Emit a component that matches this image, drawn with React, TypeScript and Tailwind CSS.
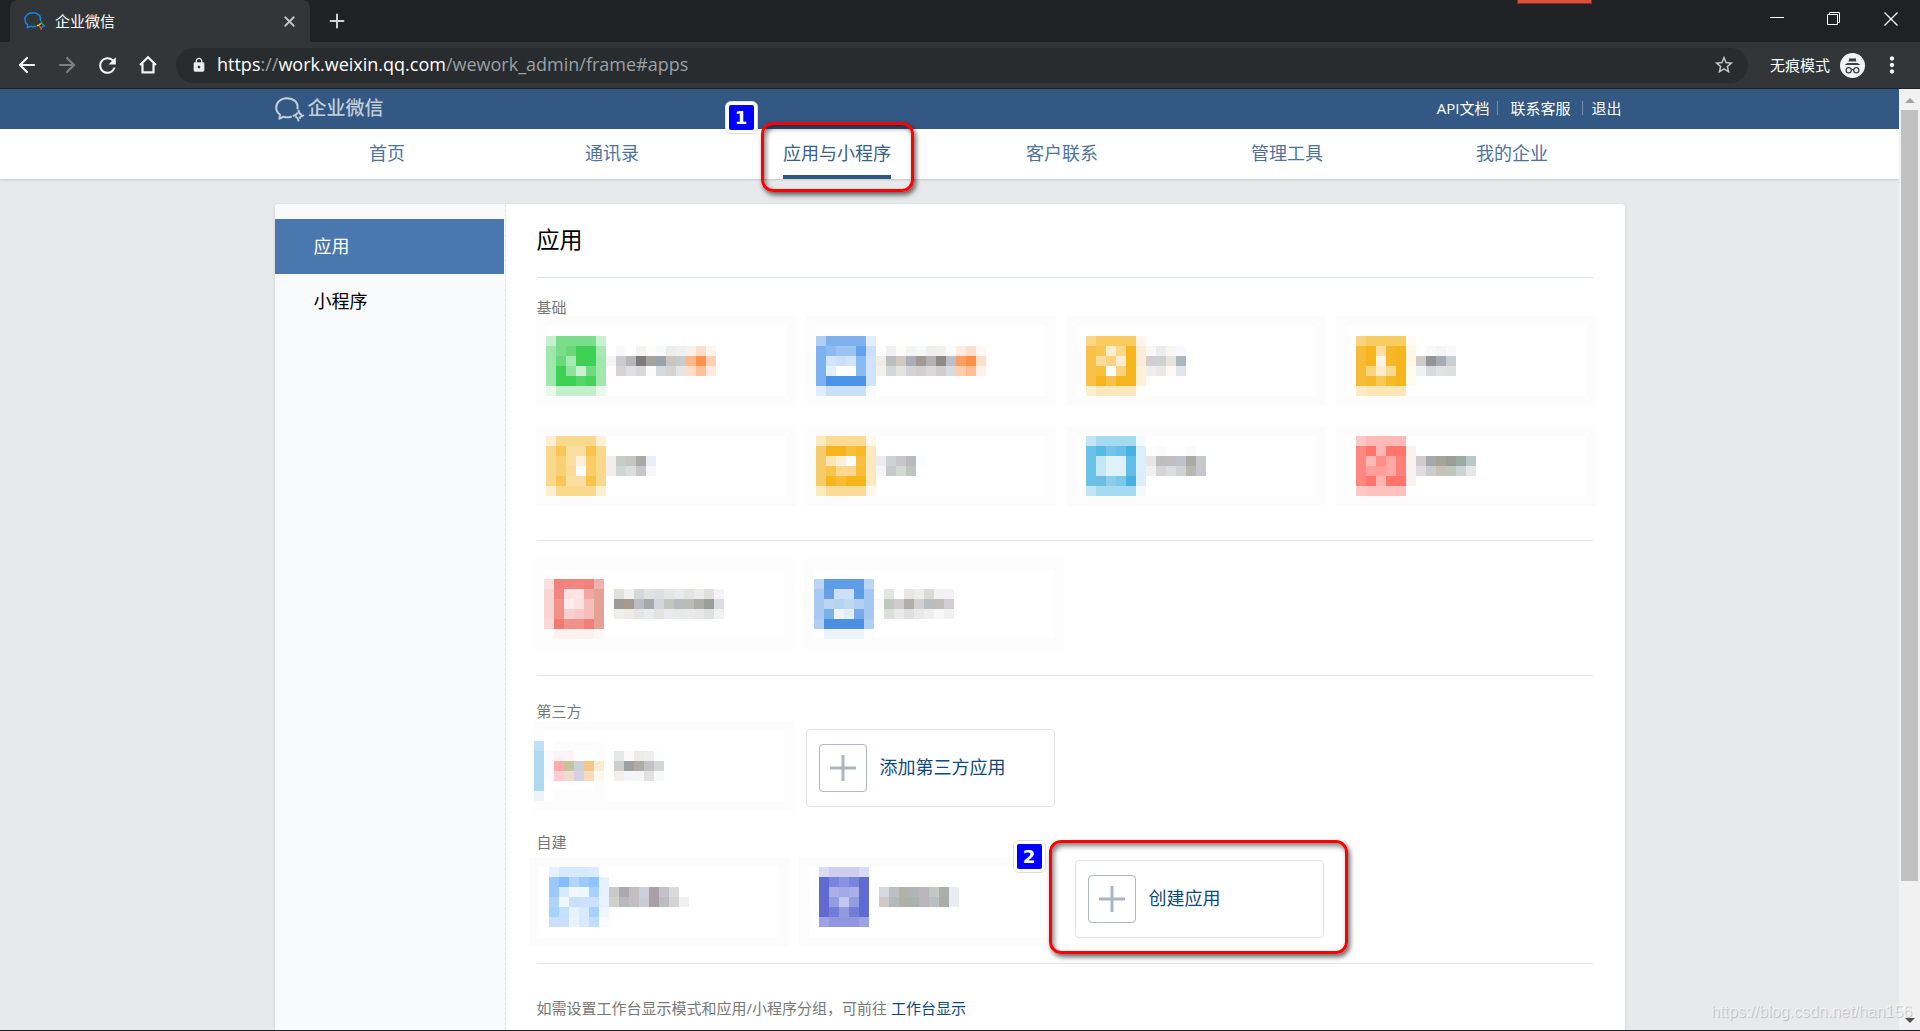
import React from "react";
import {ArrowLeft, ArrowRight, Plus, X} from "lucide-react";
import {MdLock, MdMoreVert, MdRefresh, MdStarBorder} from "react-icons/md";

interface MosaicData {
    frame: [number, number, number, number];
    at: [number, number];
    rows: string[];
}

const CELL = 10;

// every row is a list of 10px cells, "." leaves the cell empty
const basicApps: MosaicData[] = [
    {
        frame: [-1, -6, 260, 90],
        at: [9, 14],
        rows: [
            "c5f0ce 7add8b 7add8b 7add8b 7add8b c8f1d0",
            "9fe8ad 7add8b 69d97c 3dd052 3dd052 a6e9b2 . f9f9f9 . f3f3f3 fdfcfb f8fafc ededeb eff0f2 fff0e8 ffdfcb fff5f0",
            "9fe8ad 69d97c a5eab1 3dd052 3dd052 a0e8ad f5f4f4 cccbcf b8b7b7 7e7b7c a3a39c 9ba3ab c9c5c0 c7cbc9 ffb688 ff934c ffd0b3",
            "9fe8ad 3dd052 8fe29c c8f1d0 6fdb80 a0e8ad fefdfd d5d3d4 dfe0e6 d9d8d9 fcfbfb d5d8dd d4d5d3 e3e4e3 ffddc9 ffbf98 ffeadf",
            "9fe8ad 3dd052 3dd052 53d668 47d35c a0e8ad",
            "e9f9ec c5f0ce c5f0ce c5f0ce c5f0ce e9f9ec",
        ],
    },
    {
        frame: [0, -6, 250, 90],
        at: [10, 14],
        rows: [
            "b1cff5 80b1ed 80b1ed 80b1ed 80b1ed e4eefb",
            "7db0ee 8dbaf0 9bc4f3 9bc4f3 64a3eb cbdff6 . f1f1f1 fdfcf8 f3f4f6 f7f9f9 efeff0 f1f1ef fafbfd ffebe0 ffdfcc fff8f5",
            "7db0ee d2e4f9 cbdff7 d2e4f9 89baf0 d0e3f9 f0ede6 babfbd d1c9be a9afba a29a90 b3b1b4 8b8c88 bdbfc8 fb9f63 fd8f48 ffdfcc",
            "7db0ee e6f0fc fff fff 89baf0 d0e3f9 f4f1eb d2d7d7 e5e3df d3d4d8 d4cfcd dad8da cecfcd d9dadf ffceb0 ffbd94 fff1ea",
            "7db0ee 4a94e8 4a94e8 4a94e8 4a94e8 d0e3f9",
            "e1edfc c9def7 c9def7 c9def7 c9def7 f7fafe",
        ],
    },
    {
        frame: [-9, -6, 260, 90],
        at: [11, 14],
        rows: [
            "fbd68a f9cb60 f9cb60 f9cb60 f9cb60 fff5ea",
            "f7c14a f9c655 fdedd0 fad88c f6b51d fdecd5 f8f8f8 ececec f9f7f6 f9faff",
            "f7c14a fbdd9c fad481 fdedd0 f6b51d fdecd5 d3ccd2 cfd0d2 e8e3dc adb5bf",
            "f7c14a f9c03a fff f9d27c f6b51d fdf1dc eeeeef e9e9ea fdf8f3 e1e4ec",
            "f7c14a f6b51d f9c24a f6b51d f6b51d fdf1dc",
            "fdefd0 fde8bc fde8bc fde8bc fde8bc fffdfa",
        ],
    },
    {
        frame: [-8, -6, 260, 90],
        at: [12, 14],
        rows: [
            "f9d37d f9cc62 f9cc62 f9cc62 f9cc62 fffbf4",
            "f7bc35 f6b51d fbdfa4 f6b829 f6b51d fef6e6 . f9f9f9 f5f5f7 fafafa",
            "f7bc35 f6b51d fff4e2 f6b829 f6b51d fff6e5 cfcac8 929497 a6abb5 cbced0",
            "f7bc35 f9d47e fdecca fad990 f6b51d fffbf0 f1f1f2 d7d9dd e1e2e3 dfdfde",
            "f7bc35 f7b92c f9c753 f7b92c f6b51d fffbf0",
            "fcebc7 fbe6b6 fbe6b6 fbe6b6 fbe6b6 fffefc",
        ],
    },
    {
        frame: [-1, -1, 260, 80],
        at: [9, 9],
        rows: [
            "fdefd2 fad98c fad98c fad98c fad98c fdefd4",
            "fad98c f9c655 fbdfa0 fbdfa0 f9c349 fad98c",
            "fad98c f9d174 fbdf9f fdf0da f9cd66 fad98c f1eeeb c4cbc9 c4c6c0 aaa9a5 e9edf7",
            "fad98c f9d174 fbdc97 fff f9cd66 fad98c f1eeeb d1d7d7 d9dfdb c7c5c7 f7f8fb",
            "fad98c f9c655 fbdfa0 fbdfa0 f9c349 fad98c",
            "fdefd2 fad98c fad98c fad98c fad98c fdefd4",
        ],
    },
    {
        frame: [0, -1, 250, 80],
        at: [10, 9],
        rows: [
            "fceabf fbdb92 fbdb92 fbdb92 fbdb92 fff7e8",
            "f6cc6a f6b51d f6b51d f8bf3c f8b829 fce9bf",
            "f6cc6a fbe5b4 fdf0d5 fff f7bf40 fce9bf eeecee cdd2d3 c7c7c9 bababa fafcfe",
            "f6cc6a f7c44e fad98f fad98f f7bd38 fce9bf f5f5f5 c6cacd d5d7d2 bec5c3",
            "f6cc6a f6b51d f8bc35 f6b51d f6b51d fce9bf",
            "fceabf fbdb95 fbdb95 fbdb95 fbdb95 fff7e8",
        ],
    },
    {
        frame: [-9, -1, 260, 80],
        at: [11, 9],
        rows: [
            "c1e5f5 a6daf0 a6daf0 a6daf0 a6daf0 f4fbfe",
            "6bc2e8 58b9e5 73c4e8 68c0e7 47b2e1 dbeff9 . fbfbfb . . fbfbfb",
            "6bc2e8 c4e7f6 dff2fa dff2fa 63bee7 dbeff9 e8e6e5 bdbebe c2bdbf bfc2cc aaaaa7 c6c9c8",
            "6bc2e8 c4e7f6 dff2fa dff2fa 63bee7 dbeff9 f1f1f2 d5d5d5 dcdce2 d0d2d6 b8b8b0 c7c6d0",
            "6bc2e8 68bee3 8acdec 7dc8ea 47b2e1 dbeff9",
            "c1e5f5 a6daf0 a6daf0 a6daf0 a6daf0 f4fbfe",
        ],
    },
    {
        frame: [-8, -1, 260, 80],
        at: [12, 9],
        rows: [
            "ffc8c7 ffbab7 ffbab7 ffbab7 ffbab7 fffdfd",
            "ff8781 ff746c ffb5b1 ff756d ff746c fbf1ef",
            "ff8781 ffb9b5 ff8e88 ffa8a4 ff8078 fbf1ef d1cbce a5a9ad a6a499 9b9e98 9baaa3 b9c8c8",
            "ff8781 ffa19b ff9d98 ffaaa6 ff8078 fbf1ef e0dce1 c9cdd0 c7c1ba c1c6c0 cbd4d2 e6e7e9",
            "ff8781 ff756e ffb5b1 ff756d ff746c fbf1ef",
            "ffc8c7 ffc1be ffc1be ffc1be ffc1be fffdfd",
        ],
    },
];

const groupApps: MosaicData[] = [
    {
        frame: [-3, -5, 260, 90],
        at: [7, 15],
        rows: [
            "fde0de f0817b f2857f f2857f f0817b f0b1ac",
            "fbd3d0 f2857f fde2e1 fee5e4 f4a7a2 e6a196 . dfe1db f0f0f0 d7d8db e2e2e2 dfdfe0 e6e6e6 e8e9eb e3e4e2 ebebea dfdfdd f3f3f7",
            "fbd3d0 f2908a fdecec fde1e0 f7bdba e6a196 fdfcfa 9b9b98 a59990 bbbdc3 a8a8aa d4d5de c2c6be bbb9c0 bcbbb4 abadaa 9b9f9a dcdce2",
            "fbd3d0 f2908a fad0ce f9c9c8 f7bdba e6a196 . efefed f0eae6 e5e5e6 e9ebef e4e3e1 eaebee e7eae8 e9ebeb e7e7e8 dfe1df f0f0f5",
            "fbd8d6 f07a71 f2908a f2908a f08079 e6a196",
            ". fcf1ef fcf1ef fcf1ef fcf1ef fef8f9",
        ],
    },
    {
        frame: [-2, -5, 260, 90],
        at: [8, 15],
        rows: [
            "bcd5f4 5f9de5 5f9de5 5f9de5 5f9de5 bcd5f4",
            "a8caf0 689fe5 cde0f7 cde0f7 5e9be5 a6c8f0 . e4e4e2 fbfdfe e6e6e4 ededeb dadad7 f1f3f2 f3f1f5",
            "a8caf0 bdd5f3 b7d3f2 bfd8f4 b3cff1 a6c8f0 f9faf8 bfc8bf cfcccf b0aea8 d1d1d4 b7bec2 c0bdb8 d1cdd5",
            "a8caf0 7bafe8 eef4fc e2edfa 74a9ea a6c8f0 fcfcf9 dedfdc e8e9e9 dfe0dd e9e9ea f0efed f8f8f9 f1f1f2",
            "b0cff3 4a90e2 4a90e2 4a90e2 4a90e2 b0cff3",
            ". edf4fc edf4fc edf4fc edf4fc fbfdff",
        ],
    },
];

const thirdPartyApp: MosaicData = {
    frame: [-3, -8, 260, 90],
    at: [-3, 12],
    rows: [
        "bfe0f4 . fcfcfc fcfcfc fcfcfc fcfcfc fcfcfc",
        "b0d8f0 fcfcfc fff3f3 fff4f4 . . fcfcfc . e6e7e8 fafaf9 ebebec eeeeed fdfdfd",
        "b0d8f0 fcfcfc ffabae c6c49e cbd1d4 f6c68b fcebd3 . cececd 9fa0a2 b0aba6 c0c2c8 d4d5d7",
        "b0d8f0 fcfcfc ffcdcf efdbd2 d6d0e6 f8dbbb fdf8f0 . f1f0ef f3f5f9 f4f6f5 e3e1e0 f7f8fa",
        "b0d8f0 . . . . . fcfcfc",
        "ecf4fb . fcfcfc fcfcfc fcfcfc fcfcfc fcfcfc",
    ],
};

const ownApps: MosaicData[] = [
    {
        frame: [-8, -3, 260, 90],
        at: [12, 7],
        rows: [
            "e7f0ff d5e8fe d7e9fc d7e9fc dbebfc fdfeff",
            "9cc9fc 84bcff b1d5fd 9bcafb 8dc3ff e7f1ff",
            "9cc9fc d7e8ff f3f8ff eef6ff a5d1ff e7f1ff c9c9c8 aaa9b0 c3bdbe cacfda aaa0a6 c2c3ca dadada",
            "b0d3fa eef6ff c8dffd cbe1ff cbe1ff e7f1ff d1d1cc bab8be c3bec4 cacdd7 aaa0a6 bcbdc4 d4d4d5 f0f0f1",
            "a5d1ff c3dfff e3f2ff d7ebfc a5d1ff f0f7ff",
            "c8e0fd c8e0fd e9f3fe d7e9fa c0defc f7fbff",
        ],
    },
    {
        frame: [-7, -3, 260, 90],
        at: [13, 7],
        rows: [
            "d9daf5 cccdef cccdef cccdef d9daf5",
            "606bd2 7a84dc 8991e0 7a84dc 606bd2",
            "606bd2 aab0e7 a3a9e7 aab0e7 606bd2 . d6d7df bdbfc1 b0b2aa b0b6b6 bab6bb c2c9c5 abaea9 ebecf3",
            "606bd2 949ce2 c3c6f0 949ce2 606bd2 . d0c9c8 b1babf afb1a7 aab2ad bab5bb babfc2 abaca5 ebecf3",
            "606bd2 737dda 949ae2 737dda 606bd2",
            "9da2e4 9096e0 9096e0 9096e0 9da2e4",
        ],
    },
];

const navItems = ["首页", "通讯录", "应用与小程序", "客户联系", "管理工具", "我的企业"];

const Mosaic: React.FC<{ data: MosaicData }> = ({data}) => {
    const [fx, fy, fw, fh] = data.frame;
    const [x0, y0] = data.at;
    return (
        <svg className="block h-[78px] w-full overflow-visible" shapeRendering="crispEdges" aria-hidden="true">
            <rect x={fx + 5} y={fy + 5} width={fw - 10} height={fh - 10} fill="none" stroke="#fcfcfc" strokeWidth="10"/>
            {data.rows.map((row, r) =>
                row.split(" ").map((color, c) =>
                    color === "." ? null : (
                        <rect
                            key={`${r}-${c}`}
                            x={x0 + c * CELL}
                            y={y0 + r * CELL}
                            width={CELL}
                            height={CELL}
                            fill={`#${color}`}
                        />
                    )
                )
            )}
        </svg>
    );
};

const AddCard: React.FC<{ label: string }> = ({label}) => (
    <button className="flex h-[78px] w-full items-center gap-[13px] rounded border border-[#e4e6e9] bg-white pl-3 text-lg text-[#0d4a7f]">
        <span className="flex size-12 items-center justify-center rounded border border-[#acb8c6]">
            <svg width="26" height="26" viewBox="0 0 26 26" stroke="#acb6c2" strokeWidth="3" aria-hidden="true">
                <path d="M13 0v26M0 13h26"/>
            </svg>
        </span>
        <span className="pb-0.5">{label}</span>
    </button>
);

const StepBadge: React.FC<{ step: number, className: string }> = ({step, className}) => (
    <span
        className={`absolute z-10 flex size-[33px] items-center justify-center rounded-md border border-[#dedede] bg-white p-[3px] ${className}`}>
        <span
            className="flex size-full items-center justify-center rounded-xs bg-[#0000ff] font-['DejaVu_Sans'] text-lg leading-none font-bold text-white">
            {step}
        </span>
    </span>
);

const Outline: React.FC<{ className: string }> = ({className}) => (
    <span
        className={`pointer-events-none absolute rounded-xl border-3 border-[#ff0000] shadow-[2px_3px_5px_rgba(0,0,0,0.6),inset_2px_3px_5px_rgba(0,0,0,0.5)] ${className}`}/>
);

const WeworkLogo: React.FC<{ className: string, colors: string[] }> = ({className, colors}) => (
    <svg className={className} viewBox="0 0 30 25" fill="none" strokeWidth="2" strokeLinecap="round" strokeLinejoin="round"
         aria-hidden="true">
        <path d="M22.500 11.500C23.500 5.500 18.500 1.200 12 1.200C5.700 1.200 1.200 5.300 1.200 10.500C1.200 13.600 2.700 16 5 17.800L4.400 21.800L8.500 19.700C11 20.500 13.500 20.400 16 19.700"
              stroke={colors[0]}/>
        <path d="M23.500 13.800Q24 16.500 26 17.500" stroke={colors[1]}/>
        <path d="M28.300 18.600Q25.600 19 24.700 21" stroke={colors[0]}/>
        <path d="M23.500 23.600Q23 20.800 21 19.900" stroke={colors[2]}/>
        <path d="M18.500 18.700Q21.300 18.300 22.300 16.300" stroke={colors[3]}/>
    </svg>
);

const BrowserBar: React.FC = () => (
    <header className="shrink-0 border-b border-[#202124] bg-[#323639] font-['Open_Sans','Noto_Sans_CJK_SC',sans-serif]">
        <div className="relative flex h-[42px] items-stretch bg-[#202124] pl-[10px]">
            <div className="flex w-[300px] items-center rounded-t-lg bg-[#323639] pr-3 pl-[14px] text-white">
                <WeworkLogo className="mr-[9px] h-5 w-[22px]" colors={["#1485ee", "#1fae3a", "#f5571d", "#f9bc10"]}/>
                <span className="flex-1 text-[15px]">企业微信</span>
                <button aria-label="关闭标签页" className="text-[#c4c7ca]"><X size={17} strokeWidth={2.500}/></button>
            </div>
            <button aria-label="新标签页" className="ml-4 text-[#d0d2d4]"><Plus size={22} strokeWidth={2.200}/></button>
            <div className="absolute top-0 right-[328px] h-1 w-[75px] border border-t-0 border-[#8f2a20] bg-[#d9503f]"/>
            <div className="ml-auto flex items-start gap-[43px] pt-3 pr-[22px] text-white">
                <button aria-label="最小化">
                    <svg width="14" height="14" stroke="currentColor"><path d="M0 5.500h14"/></svg>
                </button>
                <button aria-label="还原">
                    <svg width="14" height="14" fill="none" stroke="currentColor">
                        <path d="M.5 2.500h10v10H.5zM2.500 2.500v-2h10v10h-2"/>
                    </svg>
                </button>
                <button aria-label="关闭">
                    <svg width="14" height="14" stroke="currentColor" strokeWidth="1.300"><path d="M.5.5l13 13M13.500.5l-13 13"/></svg>
                </button>
            </div>
        </div>
        <div className="flex h-[46px] items-center pl-[15px] text-[#f1f3f4]">
            <button aria-label="后退" className="mr-4"><ArrowLeft size={24} strokeWidth={2.200}/></button>
            <button aria-label="前进" className="mr-4 text-[#7d8083]"><ArrowRight size={24} strokeWidth={2.200}/></button>
            <button aria-label="重新加载" className="mr-4"><MdRefresh size={25}/></button>
            <button aria-label="主页" className="mr-4">
                <svg width="24" height="24" viewBox="0 0 24 24" fill="none" stroke="currentColor" strokeWidth="2.200">
                    <path d="M4 12L12 4.300L20 12M6.500 10.500V19.400H17.500V10.500"/>
                </svg>
            </button>
            <div className="flex h-[35px] flex-1 items-center rounded-full bg-[#282c2f] pr-[13px] pl-[15px]">
                <MdLock size={16} className="mr-[10px] text-[#e8eaed]"/>
                <span className="flex-1 pb-0.5 text-lg text-[#9aa0a6]">
                    <span className="text-white">https</span>://<span className="text-white">work.weixin.qq.com</span>/wework_admin/frame#apps
                </span>
                <button aria-label="收藏" className="text-[#c6c9cc]"><MdStarBorder size={22}/></button>
            </div>
            <span className="ml-[22px] text-[15px] text-white">无痕模式</span>
            <svg className="ml-[10px]" width="25" height="25" viewBox="0 0 25 25" fill="none" aria-hidden="true">
                <circle cx="12.500" cy="12.500" r="12.500" fill="#f1f3f4"/>
                <path d="M8.500 8.500L9.500 5Q12.500 6 15.500 5L16.500 8.500Z" fill="#3c4043"/>
                <path d="M4.500 12L7.500 10H17.500L20.500 12Z" fill="#3c4043"/>
                <circle cx="8.700" cy="17.300" r="2.600" stroke="#3c4043" strokeWidth="1.200"/>
                <circle cx="16.300" cy="17.300" r="2.600" stroke="#3c4043" strokeWidth="1.200"/>
                <path d="M11.300 17Q12.500 16.300 13.700 17" stroke="#3c4043" strokeWidth="1.200"/>
            </svg>
            <button aria-label="更多" className="mr-[15px] ml-[14px]"><MdMoreVert size={26}/></button>
        </div>
    </header>
);

const Scrollbar: React.FC = () => (
    <div className="flex w-[21px] shrink-0 flex-col items-center bg-[#f1f1f1]">
        <svg className="h-[21px] w-[10px] shrink-0" viewBox="0 0 10 21" fill="#a3a3a3"><path d="M0 14l5-5 5 5z"/></svg>
        <div className="flex w-full flex-1 flex-col px-[2px]">
            <div className="flex-[771] bg-[#c1c1c1]"/>
            <div className="flex-[128]"/>
        </div>
        <svg className="h-[21px] w-[10px] shrink-0" viewBox="0 0 10 21" fill="#505050"><path d="M0 9l5 5 5-5z"/></svg>
    </div>
);

const SectionLabel: React.FC<{ children: string }> = ({children}) => (
    <h2 className="pb-0.5 text-[15px] leading-[18px] text-[#787878]">{children}</h2>
);

export default function App() {
    return (
        <div
            className="relative flex h-screen flex-col overflow-hidden border-b border-[#202124] bg-[#e8e9eb] font-['Open_Sans','Noto_Sans_CJK_SC',sans-serif]">
            <BrowserBar/>
            <div className="flex min-h-0 flex-1">
                <div className="flex min-w-0 flex-1 flex-col">
                    <div className="h-10 shrink-0 bg-[#335883]">
                        <div className="mx-auto flex h-full max-w-[1350px] items-center justify-between">
                            <a href="#" className="flex items-center gap-[3px] text-[19px] font-medium text-[#c2cddb]">
                                <WeworkLogo className="h-[25px] w-[30px]" colors={["#c2cddb", "#c2cddb", "#c2cddb", "#c2cddb"]}/>
                                <span className="pb-0.5">企业微信</span>
                            </a>
                            <div className="flex items-center pr-[3px] pb-0.5 text-[15px] text-white">
                                <a href="#">API文档</a>
                                <span className="ml-2 h-[14px] w-px bg-[#7590b0]"/>
                                <a href="#" className="ml-3">联系客服</a>
                                <span className="ml-3 h-[14px] w-px bg-[#7590b0]"/>
                                <a href="#" className="ml-2">退出</a>
                            </div>
                        </div>
                    </div>
                    <nav className="h-[50px] shrink-0 bg-white shadow-[0_1px_2px_rgba(0,0,0,0.15)]">
                        <div className="mx-auto grid h-full max-w-[1350px] grid-cols-6">
                            {navItems.map((item, i) => (
                                <div key={item} className="relative flex justify-center">
                                    <a
                                        href="#"
                                        className={`flex items-center border-b-4 pt-0.5 text-lg ${i === 2 ? "border-[#2d5680] text-[#3a5f8c]" : "border-transparent text-[#4d73a1]"}`}
                                    >
                                        {item}
                                    </a>
                                    {i === 2 && (
                                        <>
                                            <StepBadge step={1} className="-top-7 left-0"/>
                                            <Outline className="inset-x-9 -top-[7px] -bottom-[13px]"/>
                                        </>
                                    )}
                                </div>
                            ))}
                        </div>
                    </nav>
                    <div
                        className="mx-auto mt-[25px] flex w-full max-w-[1350px] flex-1 rounded-t bg-white shadow-[0_1px_3px_rgba(0,0,0,0.15)]">
                        <aside className="w-[231px] shrink-0 rounded-tl border-r border-dashed border-[#dfe3e8] bg-[#f9fafc] pt-[15px] text-lg">
                            <a href="#" className="mr-px flex h-[55px] items-center bg-[#4a77ad] pb-0.5 pl-[39px] text-white">应用</a>
                            <a href="#" className="mr-px flex h-[55px] items-center pb-0.5 pl-[39px] text-black">小程序</a>
                        </aside>
                        <main className="flex-1 pr-8 pl-[31px]">
                            <h1 className="flex h-[74px] items-center border-b border-[#dadfe4] pb-0.5 text-[23px] text-black">应用</h1>
                            <div className="pt-5 pb-[35px]">
                                <SectionLabel>基础</SectionLabel>
                                <div className="mt-1 grid grid-cols-4 gap-x-5 gap-y-[27px]">
                                    {basicApps.map((app, i) => <Mosaic key={i} data={app}/>)}
                                </div>
                            </div>
                            <div className="grid grid-cols-4 gap-x-5 border-y border-[#e4e6e8] pt-[23px] pb-[33px]">
                                {groupApps.map((app, i) => <Mosaic key={i} data={app}/>)}
                            </div>
                            <div className="border-b border-[#e4e6e8] pt-[26px] pb-[25px]">
                                <SectionLabel>第三方</SectionLabel>
                                <div className="mt-[7px] mb-[26px] grid grid-cols-4 gap-x-5">
                                    <Mosaic data={thirdPartyApp}/>
                                    <AddCard label="添加第三方应用"/>
                                </div>
                                <SectionLabel>自建</SectionLabel>
                                <div className="mt-[7px] grid grid-cols-4 gap-x-5">
                                    {ownApps.map((app, i) => <Mosaic key={i} data={app}/>)}
                                    <div className="relative">
                                        <AddCard label="创建应用"/>
                                        <StepBadge step={2} className="-top-5 -left-[62px]"/>
                                        <Outline className="-top-5 -right-6 -bottom-4 -left-[26px]"/>
                                    </div>
                                </div>
                            </div>
                            <p className="pt-[35px] text-[15px] leading-[18px] text-[#787878]">
                                如需设置工作台显示模式和应用/小程序分组，可前往 <a href="#" className="text-[#0d4a7f]">工作台显示</a>
                            </p>
                        </main>
                    </div>
                </div>
                <Scrollbar/>
            </div>
            <span
                className="pointer-events-none absolute right-2 bottom-1.5 font-['Liberation_Sans'] text-base text-white/60 [text-shadow:1px_1px_1px_rgba(0,0,0,0.2)]">
                https://blog.csdn.net/han156
            </span>
        </div>
    );
}
